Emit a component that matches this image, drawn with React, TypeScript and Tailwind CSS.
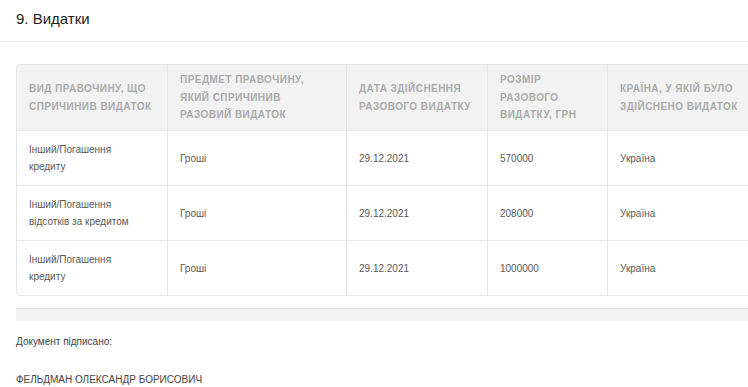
const headers = [
  "Вид правочину, що спричинив видаток",
  "Предмет правочину, який спричинив разовий видаток",
  "Дата здійснення разового видатку",
  "Розмір разового видатку, грн",
  "Країна, у якій було здійснено видаток",
];

const rows = [
  ["Інший/Погашення кредиту", "Гроші", "29.12.2021", "570000", "Україна"],
  ["Інший/Погашення відсотків за кредитом", "Гроші", "29.12.2021", "208000", "Україна"],
  ["Інший/Погашення кредиту", "Гроші", "29.12.2021", "1000000", "Україна"],
];

const cols = "grid grid-cols-[150px_179px_141px_120px_160px]";

export default function App() {
  return (
    <div className="w-[748px] h-[387px] overflow-hidden bg-white font-['Liberation_Sans',Arial,sans-serif]">
      {/* Section title */}
      <div className="h-[42px] border-b border-[#eeeeee] px-4 pt-[9px]">
        <h2 className="text-[15px] leading-[20px] text-[#222]">9. Видатки</h2>
      </div>

      <div className="pl-4 pt-[22px]">
        {/* Table */}
        <div className="w-[751px] rounded-[4px] border border-[#e6e6e6] overflow-hidden">
          <div className={`${cols} h-[65px] bg-[#f2f2f2]`}>
            {headers.map((h, i) => (
              <div
                key={i}
                className={`flex items-center pl-[12px] pr-[14px] ${i > 0 ? "border-l border-[#e6e6e6]" : ""}`}
              >
                <span className="text-[10px] leading-[17.5px] font-bold uppercase tracking-[0.45px] text-[#aaaaaa]">
                  {h}
                </span>
              </div>
            ))}
          </div>
          {rows.map((r, ri) => (
            <div key={ri} className={`${cols} h-[55px] border-t border-[#e6e6e6]`}>
              {r.map((c, i) => (
                <div
                  key={i}
                  className={`flex items-center pl-[12px] pr-[26px] ${i > 0 ? "border-l border-[#e6e6e6]" : ""}`}
                >
                  <span className="text-[10px] leading-[17px] text-[#595959]">{c}</span>
                </div>
              ))}
            </div>
          ))}
        </div>

        {/* Footer bar */}
        <div className="mt-[12px] h-[13px] border-t border-[#e0e0e0] bg-[#f4f4f4]" />

        <p className="mt-[14px] text-[10px] leading-[14px] text-[#444]">Документ підписано:</p>
        <p className="mt-[24px] text-[10px] leading-[14px] text-[#444]">ФЕЛЬДМАН ОЛЕКСАНДР БОРИСОВИЧ</p>
      </div>
    </div>
  );
}
